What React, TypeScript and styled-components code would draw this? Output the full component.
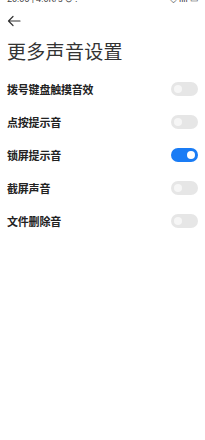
import styled, { createGlobalStyle } from 'styled-components';

const GlobalStyle = createGlobalStyle`
  body {
    margin: 0;
    background: #ffffff;
    font-family: 'Noto Sans CJK SC', 'Noto Sans', sans-serif;
    color: #1f1f1f;
  }
`;

const Page = styled.div`
  width: 205px;
  height: 440px;
  background: #ffffff;
  display: flex;
  flex-direction: column;
`;

const StatusBar = styled.div`
  height: 4px;
  overflow: hidden;
  display: flex;
  justify-content: space-between;
  align-items: flex-end;
  padding: 0 6px 0 7px;
  font-size: 9px;
  line-height: 9px;
  color: #444;
  font-family: 'Roboto', sans-serif;
`;

const StatusText = styled.span`
  white-space: nowrap;
`;

const NavBar = styled.div`
  height: 34px;
  display: flex;
  align-items: center;
  padding-left: 7px;
`;

const Title = styled.h1`
  margin: 0;
  padding: 0 0 0 7px;
  font-size: 19px;
  line-height: 26px;
  font-weight: 400;
  color: #333333;
  letter-spacing: 0.3px;
`;

const List = styled.div`
  display: flex;
  flex-direction: column;
  margin-top: 8px;
`;

const Row = styled.div`
  height: 33px;
  display: flex;
  align-items: center;
  justify-content: space-between;
  padding: 0 7px 0 7px;
`;

const Label = styled.span`
  font-size: 11px;
  font-weight: 700;
  color: #222222;
  letter-spacing: -0.2px;
`;

const Toggle = styled.div<{ on: boolean }>`
  width: 27px;
  height: 14px;
  border-radius: 7px;
  background: ${p => (p.on ? '#1a7cf5' : '#e6e6e6')};
  display: flex;
  align-items: center;
  justify-content: ${p => (p.on ? 'flex-end' : 'flex-start')};
  padding: 0 3px;
  box-sizing: border-box;
`;

const Knob = styled.div<{ on: boolean }>`
  width: 8px;
  height: 8px;
  border-radius: 50%;
  background: ${p => (p.on ? '#ffffff' : '#f6f6f6')};
`;

const items = [
  { label: '拨号键盘触摸音效', on: false },
  { label: '点按提示音', on: false },
  { label: '锁屏提示音', on: true },
  { label: '截屏声音', on: false },
  { label: '文件删除音', on: false },
];

function App() {
  return (
    <>
      <GlobalStyle />
      <Page>
        <StatusBar>
          <StatusText>20:05 | 4.0K/s ⊙ ⁞</StatusText>
          <StatusText>◇ ıllı ▭</StatusText>
        </StatusBar>
        <NavBar>
          <svg width="14" height="12" viewBox="0 0 14 12">
            <path d="M13 6H1.5M6 1.5L1.5 6L6 10.5" stroke="#333" strokeWidth="1.2" fill="none" strokeLinecap="round" strokeLinejoin="round" />
          </svg>
        </NavBar>
        <Title>更多声音设置</Title>
        <List>
          {items.map((d, i) => (
            <Row key={i}>
              <Label>{d.label}</Label>
              <Toggle on={d.on}>
                <Knob on={d.on} />
              </Toggle>
            </Row>
          ))}
        </List>
      </Page>
    </>
  );
}

export default App;
